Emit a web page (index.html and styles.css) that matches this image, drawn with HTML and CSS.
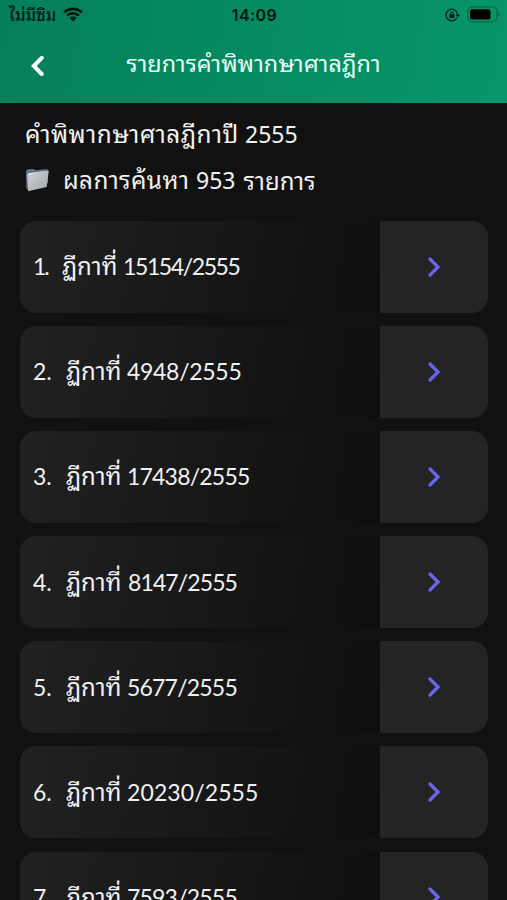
FILE: index.html
```
<!DOCTYPE html>
<html lang="th">
<head>
    <meta charset="UTF-8">
    <meta name="viewport" content="width=device-width, initial-scale=1.0">
    <title>รายการคำพิพากษาศาลฎีกา</title>
    <link rel="stylesheet" href="styles.css">
</head>
<body>
    <header class="header">
        <div class="status-bar">
            <div class="status-left">
                <span class="carrier">ไม่มีซิม</span>
                <svg class="wifi" width="20" height="15" viewBox="0 0 20 15">
                    <path d="M1.2 5.4a12.6 12.6 0 0 1 17.6 0M4.2 8.6a8.3 8.3 0 0 1 11.6 0" fill="none" stroke="#03170f" stroke-width="2.7"/>
                    <path d="M10 14.4 6.6 11a4.8 4.8 0 0 1 6.8 0z" fill="#03170f"/>
                </svg>
            </div>
            <span class="clock">14:09</span>
            <div class="status-right">
                <svg width="15" height="14" viewBox="0 0 15 14">
                    <path d="M11.9 9.8A5.8 5.8 0 1 1 12.4 5.6" fill="none" stroke="#03170f" stroke-width="1.2"/>
                    <path d="M10.7 6.2h4.2l-2.1 3z" fill="#03170f"/>
                    <rect x="4.4" y="6.2" width="5" height="3.8" rx=".6" fill="#03170f"/>
                    <path d="M5.4 6.5V5.4a1.5 1.5 0 0 1 3 0v1.1" fill="none" stroke="#03170f"/>
                </svg>
                <svg width="33" height="17" viewBox="0 0 33 17">
                    <rect x=".8" y=".8" width="29" height="15" rx="4.4" fill="none" stroke="#056a4a" stroke-width="1.3"/>
                    <rect x="3" y="3.2" width="20.5" height="10.2" rx="2.2" fill="#000"/>
                    <path d="M31.3 5.8q1.4.8 1.4 2.4t-1.4 2.4z" fill="#056a4a"/>
                </svg>
            </div>
        </div>
        <div class="nav-bar">
            <svg class="back" width="16" height="24" viewBox="0 0 16 24">
                <path d="M11.8 3.8 3.8 12l8 8" fill="none" stroke="#fff" stroke-width="4" stroke-linecap="round"/>
            </svg>
            <h1 class="nav-title">รายการคำพิพากษาศาลฎีกา</h1>
        </div>
    </header>
    <main class="content">
        <div class="year"><span class="year-label">คำพิพากษาศาลฎีกาปี</span><span class="year-value">2555</span></div>
        <div class="result">
            <svg class="folder" width="25" height="24" viewBox="0 0 25 24">
                <defs>
                    <linearGradient id="front" x1="0" y1="0" x2="1" y2="1">
                        <stop offset="0" stop-color="#d0d3d8"/>
                        <stop offset="1" stop-color="#a2a4a8"/>
                    </linearGradient>
                </defs>
                <path d="M1 3.2 2 1.5l7-.6 1.5 1.3L22 1l1 1v13L3 22 1.4 20z" fill="#68747e"/>
                <path d="M3 5.2 21.4 3l-.8 13L3.2 20z" fill="#e8eaee"/>
                <path d="M2.2 6.4 11.5 5.2l1.5-1.3 10.8-1.2-2.2 16.3L3.2 23.2z" fill="url(#front)"/>
            </svg>
            <span class="result-label">ผลการค้นหา</span>
            <span class="result-count">953</span>
            <span class="result-unit">รายการ</span>
        </div>
        <div class="list">
            <div class="card">
                <div class="card-text"><span class="order narrow">1.</span><span class="label">ฏีกาที่</span><span class="number n1">15154/2555</span></div>
                <div class="card-arrow"><svg width="16" height="22" viewBox="0 0 16 22"><path class="chevron" d="M4 3 12 11l-8 8"/></svg></div>
            </div>
            <div class="card">
                <div class="card-text"><span class="order">2.</span><span class="label">ฏีกาที่</span><span class="number n2">4948/2555</span></div>
                <div class="card-arrow"><svg width="16" height="22" viewBox="0 0 16 22"><path class="chevron" d="M4 3 12 11l-8 8"/></svg></div>
            </div>
            <div class="card">
                <div class="card-text"><span class="order">3.</span><span class="label">ฏีกาที่</span><span class="number n3">17438/2555</span></div>
                <div class="card-arrow"><svg width="16" height="22" viewBox="0 0 16 22"><path class="chevron" d="M4 3 12 11l-8 8"/></svg></div>
            </div>
            <div class="card">
                <div class="card-text"><span class="order">4.</span><span class="label">ฏีกาที่</span><span class="number n4">8147/2555</span></div>
                <div class="card-arrow"><svg width="16" height="22" viewBox="0 0 16 22"><path class="chevron" d="M4 3 12 11l-8 8"/></svg></div>
            </div>
            <div class="card">
                <div class="card-text"><span class="order">5.</span><span class="label">ฏีกาที่</span><span class="number n5">5677/2555</span></div>
                <div class="card-arrow"><svg width="16" height="22" viewBox="0 0 16 22"><path class="chevron" d="M4 3 12 11l-8 8"/></svg></div>
            </div>
            <div class="card">
                <div class="card-text"><span class="order">6.</span><span class="label">ฏีกาที่</span><span class="number n6">20230/2555</span></div>
                <div class="card-arrow"><svg width="16" height="22" viewBox="0 0 16 22"><path class="chevron" d="M4 3 12 11l-8 8"/></svg></div>
            </div>
            <div class="card">
                <div class="card-text"><span class="order">7.</span><span class="label">ฏีกาที่</span><span class="number n7">7593/2555</span></div>
                <div class="card-arrow"><svg width="16" height="22" viewBox="0 0 16 22"><path class="chevron" d="M4 3 12 11l-8 8"/></svg></div>
            </div>
        </div>
    </main>
</body>
</html>
```
FILE: styles.css
```
* {
    box-sizing: border-box;
}
body {
    margin: 0;
    height: 900px;
    overflow: hidden;
    background: #111;
    color: #f1f1f1;
    font-family: "Noto Sans", "Noto Sans Thai Looped", "Noto Looped Thai", Loma, Garuda, sans-serif;
    font-size: 23px;
}
.header {
    height: 103px;
    background: linear-gradient(100deg, #057f5b, #079669);
}
.status-bar {
    display: grid;
    grid-template-columns: 1fr auto 1fr;
    align-items: center;
    height: 29px;
    padding: 0 7px 0 9px;
    color: #03170f;
}
.status-left, .status-right {
    display: flex;
    align-items: center;
    gap: 7px;
}
.status-right {
    justify-content: flex-end;
}
.carrier {
    width: 47px;
    font-size: 16.5px;
    font-weight: 500;
    line-height: 29px;
    white-space: nowrap;
}
.clock {
    font-family: Inter, sans-serif;
    font-size: 16px;
    font-weight: 600;
    letter-spacing: 0.4px;
}
.nav-bar {
    display: grid;
    grid-template-columns: 1fr auto 1fr;
    align-items: center;
    height: 74px;
    padding: 0 30px;
}
.nav-title {
    margin: 0;
    padding-bottom: 7px;
    color: #e5fff5;
    font-size: 23.4px;
    font-weight: 400;
    line-height: 34px;
}
.content {
    padding: 8px 20px 0;
}
.year, .result {
    display: flex;
    align-items: center;
    height: 46px;
    padding-left: 5px;
    white-space: nowrap;
}
.year-label {
    width: 212px;
    padding-bottom: 3px;
    font-size: 24.3px;
    letter-spacing: 0.5px;
}
.year-value {
    margin-left: 8px;
}
.folder {
    margin-right: 13px;
}
.result-label {
    width: 125px;
    padding-bottom: 3px;
    font-size: 24.3px;
    letter-spacing: 0.4px;
}
.result-count, .result-unit {
    margin-left: 8px;
}
.result-unit {
    padding-bottom: 3px;
    font-size: 24px;
}
.list {
    display: flex;
    flex-direction: column;
    gap: 13.6px;
    margin-top: 18px;
}
.card {
    display: flex;
    width: 468px;
    height: 91.5px;
    flex-shrink: 0;
    overflow: hidden;
    border-radius: 16px;
}
.card-text {
    display: flex;
    align-items: center;
    width: 360px;
    padding-left: 13px;
    background: linear-gradient(100deg, #212121, #0e0e0e);
    white-space: nowrap;
}
.order {
    width: 33px;
    padding-bottom: 1px;
    font-family: Lato, sans-serif;
}
.order.narrow {
    width: 29px;
    letter-spacing: -2px;
}
.label {
    width: 61px;
    padding-bottom: 5px;
    font-size: 24px;
}
.number {
    padding-bottom: 1px;
    font-family: Lato, sans-serif;
    letter-spacing: -0.8px;
}
.n1 {
    letter-spacing: -1.4px;
}
.n2 {
    letter-spacing: -0.3px;
}
.n4 {
    padding-left: 1px;
    letter-spacing: -0.9px;
}
.n6 {
    letter-spacing: 0.1px;
}
.card-arrow {
    display: flex;
    flex: 1;
    align-items: center;
    justify-content: center;
    background: #242424;
}
.chevron {
    fill: none;
    stroke: #6865ed;
    stroke-width: 3.3;
    stroke-linecap: round;
}
```
